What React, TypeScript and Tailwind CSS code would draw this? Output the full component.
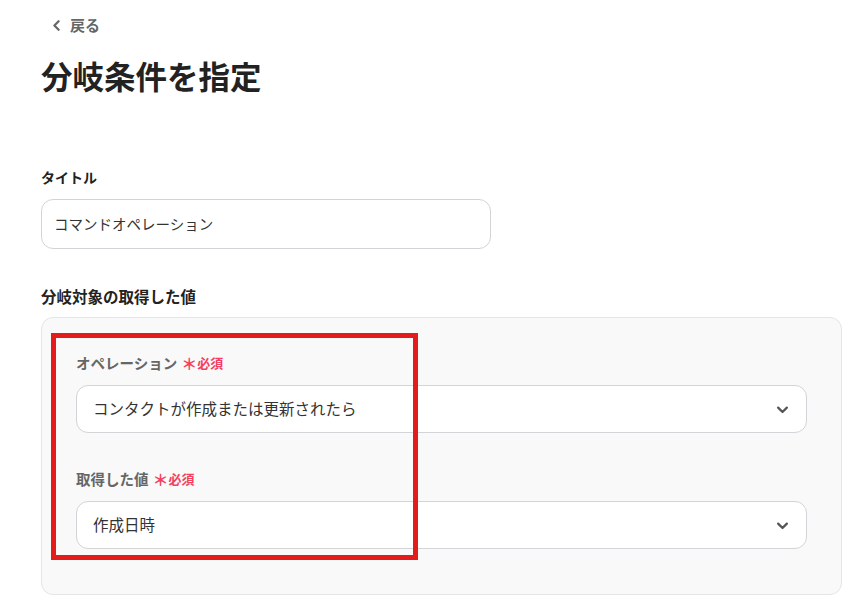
import { ChevronLeft } from "lucide-react";

const font = { fontFamily: '"Noto Sans CJK JP", "Noto Sans", sans-serif' };

function Chevron() {
  return (
    <svg width="15" height="15" viewBox="0 0 24 24" fill="none" stroke="#555" strokeWidth="3.6" strokeLinecap="round" strokeLinejoin="round">
      <path d="M5 9l7 7 7-7" />
    </svg>
  );
}

function Field({ label, value }: { label: string; value: string }) {
  return (
    <div className="flex flex-col">
      <div className="flex items-center h-5 gap-1">
        <span className="text-[14.5px] font-bold text-[#666]">{label}</span>
        <span className="text-[16px] font-bold text-[#f43f5e] leading-none">＊</span>
        <span className="text-[13px] font-bold text-[#f43f5e] -ml-1">必須</span>
      </div>
      <div className="mt-3 h-12 rounded-xl border border-[#d4d4d8] bg-white flex items-center justify-between pl-4 pr-4">
        <span className="text-[15.5px] text-[#333]">{value}</span>
        <Chevron />
      </div>
    </div>
  );
}

export default function App() {
  return (
    <div className="min-h-screen bg-white pl-[41px] pr-[15px]" style={font}>
      <div className="flex items-center h-[50px] pl-[7px] gap-[5px] text-[#666]">
        <ChevronLeft size={17} strokeWidth={3.2} />
        <span className="text-[15px] font-bold">戻る</span>
      </div>
      <h1 className="text-[31.5px] font-bold text-[#222] leading-[50px]">分岐条件を指定</h1>
      <div className="mt-[67px] text-[14px] font-bold text-[#222] leading-5">タイトル</div>
      <div className="mt-[12px] w-[450px] h-[50px] rounded-xl border border-[#d4d4d8] flex items-center pl-3">
        <span className="text-[14.5px] text-[#333]">コマンドオペレーション</span>
      </div>
      <div className="mt-[37px] text-[15.5px] font-bold text-[#222] leading-5">分岐対象の取得した値</div>
      <div className="relative mt-[11px] rounded-xl border border-[#e5e5e5] bg-[#f9f9f9] px-[34px] pt-[35px] pb-[45px] flex flex-col gap-[36px]">
        <Field label="オペレーション" value="コンタクトが作成または更新されたら" />
        <Field label="取得した値" value="作成日時" />
        <div className="absolute left-[9px] top-[15px] w-[367px] h-[227px] border-[5px] border-[#e41b1b]" />
      </div>
    </div>
  );
}
